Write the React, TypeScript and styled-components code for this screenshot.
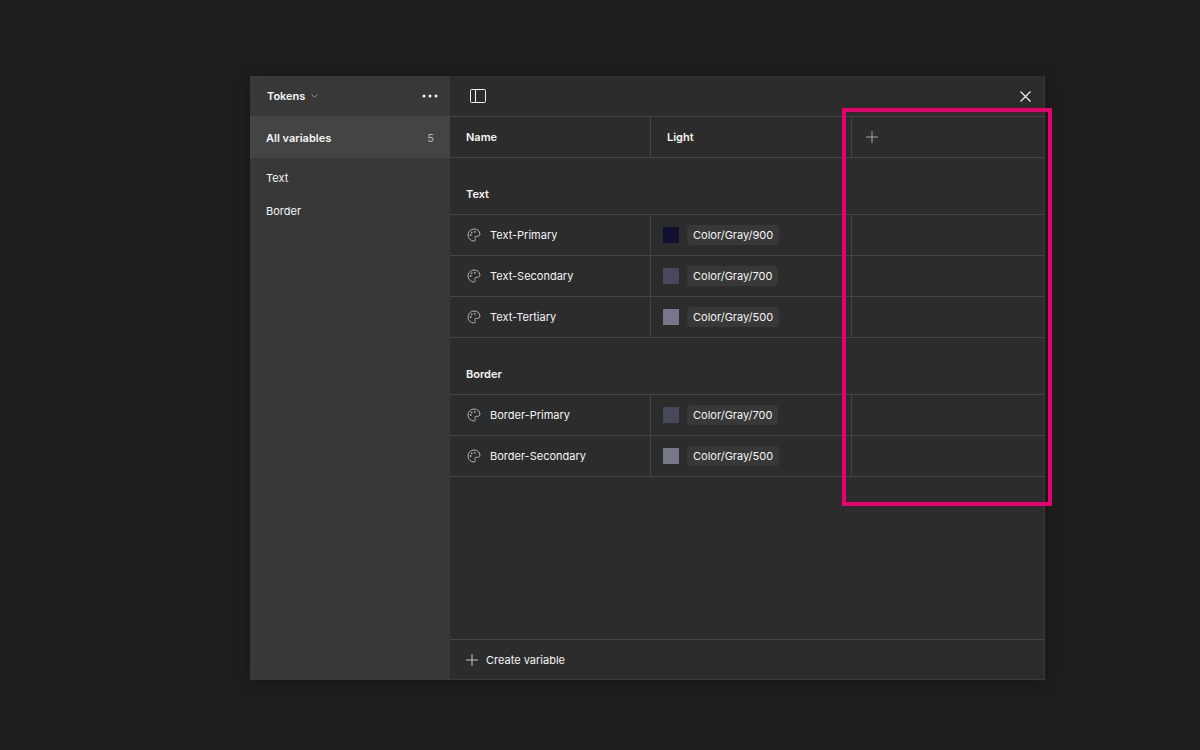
import styled, { createGlobalStyle } from 'styled-components';

const GlobalStyle = createGlobalStyle`
  html, body {
    margin: 0;
    padding: 0;
    background-color: #1e1e1e;
  }
  * {
    box-sizing: border-box;
  }
`;

const Page = styled.div`
  width: 1200px;
  height: 750px;
  padding: 76px 0 0 250px;
  background-color: #1e1e1e;
  font-family: Inter, "Liberation Sans", sans-serif;
  font-size: 11px;
  color: #f5f5f5;
  overflow: hidden;
`;

const Window = styled.div`
  position: relative;
  display: flex;
  width: 795px;
  height: 604px;
  background-color: #2c2c2c;
  box-shadow: 0 2px 14px rgba(0, 0, 0, 0.3);
`;

const Sidebar = styled.aside`
  width: 200px;
  flex-shrink: 0;
  background-color: #383838;
`;

const SidebarHeader = styled.div`
  display: flex;
  align-items: center;
  justify-content: space-between;
  height: 40px;
  padding: 0 12px 0 17px;
`;

const CollectionName = styled.div`
  display: flex;
  align-items: center;
  gap: 6px;
  font-weight: 600;
`;

const AllVariables = styled.div`
  display: flex;
  align-items: center;
  justify-content: space-between;
  height: 42px;
  padding: 1px 16px 0;
  background-color: #444444;
  font-weight: 600;
`;

const Count = styled.span`
  font-weight: 400;
  color: #b3b3b3;
`;

const GroupList = styled.div`
  display: flex;
  flex-direction: column;
  padding-top: 3px;
`;

const GroupItem = styled.div`
  display: flex;
  align-items: center;
  height: 33px;
  padding: 0 16px;
`;

const Main = styled.main`
  display: flex;
  flex-direction: column;
  flex: 1;
  min-width: 0;
  border-right: 1px solid #393939;
  border-bottom: 1px solid #393939;
`;

const Toolbar = styled.div`
  display: flex;
  align-items: center;
  justify-content: space-between;
  height: 41px;
  padding: 0 13px 0 20px;
  border-bottom: 1px solid #444444;
`;

const Row = styled.div`
  display: grid;
  grid-template-columns: 201px 201px 1fr;
  height: 41px;
  border-bottom: 1px solid #444444;
`;

const Cell = styled.div`
  display: flex;
  align-items: center;
  min-width: 0;
  & + & {
    border-left: 1px solid #444444;
    margin-left: -1px;
  }
`;

const HeaderCell = styled(Cell)`
  padding-left: 16px;
  font-weight: 600;
`;

const AddCell = styled(Cell)`
  padding-left: 14px;
`;

const NameCell = styled(Cell)`
  gap: 9px;
  padding-left: 17px;
`;

const NameText = styled.span`
  color: #f5f5f5;
`;

const ValueCell = styled(Cell)`
  gap: 8px;
  padding-left: 12px;
`;

const Swatch = styled.span<{ $color: string }>`
  width: 16px;
  height: 16px;
  flex-shrink: 0;
  background-color: ${(props) => props.$color};
`;

const AliasChip = styled.span`
  display: flex;
  align-items: center;
  height: 20px;
  padding: 0 6px;
  border-radius: 4px;
  background-color: #383838;
`;

const SectionTitle = styled.div`
  display: flex;
  align-items: flex-end;
  height: 57px;
  padding: 0 16px 13px;
  border-bottom: 1px solid #444444;
  font-weight: 600;
`;

const Spacer = styled.div`
  flex: 1;
`;

const Footer = styled.div`
  display: flex;
  align-items: center;
  gap: 8px;
  height: 40px;
  padding-left: 16px;
  border-top: 1px solid #444444;
`;

const Highlight = styled.div`
  position: absolute;
  left: 592px;
  top: 32px;
  width: 210px;
  height: 398px;
  border: 4px solid #e8006f;
  pointer-events: none;
`;

const PlusIcon = ({ color }: { color: string }) => (
  <svg width="12" height="12" viewBox="0 0 12 12" fill="none" stroke={color} strokeWidth="1">
    <path d="M6 0v12M0 6h12" />
  </svg>
);

const PaletteIcon = () => (
  <svg width="14" height="14" viewBox="0 0 14 14" fill="none" stroke="#b3b3b3" strokeWidth="1">
    <path d="M7 1a6 6 0 1 0 0 12c1 0 1.4-.7 1.4-1.4 0-.9-.6-1.2-.6-2 0-.8.6-1.3 1.4-1.3h1.6c1.3 0 2.1-.9 2.1-2.1C12.9 3 10.3 1 7 1Z" />
    <g fill="#b3b3b3" stroke="none">
      <circle cx="3.7" cy="7" r=".9" />
      <circle cx="4.7" cy="4.3" r=".9" />
      <circle cx="7.8" cy="3.8" r=".9" />
    </g>
  </svg>
);

interface IVariable {
  name: string,
  alias: string,
  color: string,
}

const sections: { title: string, variables: IVariable[] }[] = [
  {
    title: 'Text',
    variables: [
      { name: 'Text-Primary', alias: 'Color/Gray/900', color: '#101030' },
      { name: 'Text-Secondary', alias: 'Color/Gray/700', color: '#48485c' },
      { name: 'Text-Tertiary', alias: 'Color/Gray/500', color: '#77778a' },
    ],
  },
  {
    title: 'Border',
    variables: [
      { name: 'Border-Primary', alias: 'Color/Gray/700', color: '#48485c' },
      { name: 'Border-Secondary', alias: 'Color/Gray/500', color: '#77778a' },
    ],
  },
];

const App = () => {
  return (
    <Page>
      <GlobalStyle />
      <Window>
        <Sidebar>
          <SidebarHeader>
            <CollectionName>
              Tokens
              <svg width="7" height="4" viewBox="0 0 7 4" fill="none" stroke="#999999" strokeWidth="1">
                <path d="M.5.3 3.5 3.3 6.5.3" />
              </svg>
            </CollectionName>
            <svg width="16" height="4" viewBox="0 0 16 4" fill="#f5f5f5">
              <circle cx="2" cy="2" r="1.5" />
              <circle cx="8" cy="2" r="1.5" />
              <circle cx="14" cy="2" r="1.5" />
            </svg>
          </SidebarHeader>
          <AllVariables>
            All variables
            <Count>5</Count>
          </AllVariables>
          <GroupList>
            <GroupItem>Text</GroupItem>
            <GroupItem>Border</GroupItem>
          </GroupList>
        </Sidebar>
        <Main>
          <Toolbar>
            <svg width="16" height="14" viewBox="0 0 16 14" fill="none" stroke="#f5f5f5" strokeWidth="1">
              <rect x=".5" y=".5" width="15" height="13" rx="1" />
              <path d="M5.5 .5v13" />
            </svg>
            <svg width="11" height="11" viewBox="0 0 11 11" fill="none" stroke="#f5f5f5" strokeWidth="1.1">
              <path d="m.5.5 10 10M10.5.5l-10 10" />
            </svg>
          </Toolbar>
          <Row>
            <HeaderCell>Name</HeaderCell>
            <HeaderCell>Light</HeaderCell>
            <AddCell>
              <PlusIcon color="#a6a6a6" />
            </AddCell>
          </Row>
          {
            sections.map((section) => (
              <div key={section.title}>
                <SectionTitle>{section.title}</SectionTitle>
                {
                  section.variables.map((variable) => (
                    <Row key={variable.name}>
                      <NameCell>
                        <PaletteIcon />
                        <NameText>{variable.name}</NameText>
                      </NameCell>
                      <ValueCell>
                        <Swatch $color={variable.color} />
                        <AliasChip>{variable.alias}</AliasChip>
                      </ValueCell>
                      <Cell />
                    </Row>
                  ))
                }
              </div>
            ))
          }
          <Spacer />
          <Footer>
            <PlusIcon color="#c4c4c4" />
            Create variable
          </Footer>
        </Main>
        <Highlight />
      </Window>
    </Page>
  );
};

export default App;
